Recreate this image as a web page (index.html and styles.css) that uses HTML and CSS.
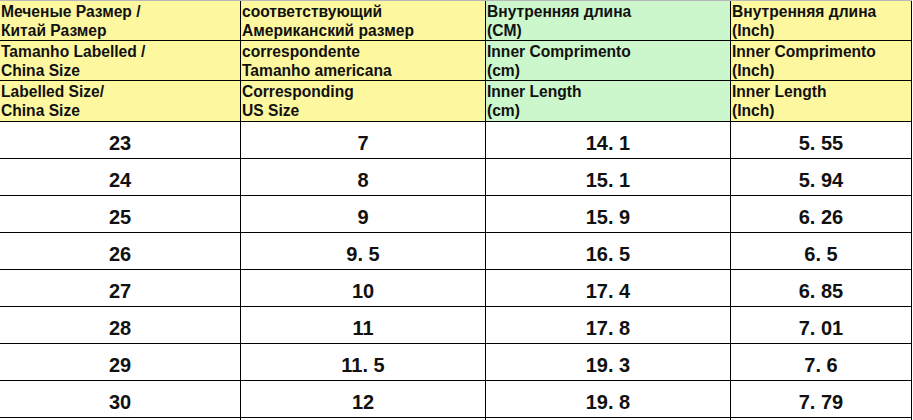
FILE: index.html
```html
<!DOCTYPE html>
<html lang="ru">
<head>
<meta charset="utf-8">
<title>Size chart</title>
<link rel="stylesheet" href="styles.css">
</head>
<body>
<table class="chart">
  <colgroup>
    <col class="c1"><col class="c2"><col class="c3"><col class="c4">
  </colgroup>
  <thead>
    <tr class="h h1">
      <th>Меченые Размер /<br>Китай Размер</th>
      <th>соответствующий<br>Американский размер</th>
      <th class="green">Внутренняя длина<br>(CM)</th>
      <th>Внутренняя длина<br>(Inch)</th>
    </tr>
    <tr class="h h2">
      <th>Tamanho Labelled /<br>China Size</th>
      <th>correspondente<br>Tamanho americana</th>
      <th class="green">Inner Comprimento<br>(cm)</th>
      <th>Inner Comprimento<br>(Inch)</th>
    </tr>
    <tr class="h h3">
      <th>Labelled Size/<br>China Size</th>
      <th>Corresponding<br>US Size</th>
      <th class="green">Inner Length<br>(cm)</th>
      <th>Inner Length<br>(Inch)</th>
    </tr>
  </thead>
  <tbody>
    <tr><td>23</td><td>7</td><td>14. 1</td><td>5. 55</td></tr>
    <tr><td>24</td><td>8</td><td>15. 1</td><td>5. 94</td></tr>
    <tr><td>25</td><td>9</td><td>15. 9</td><td>6. 26</td></tr>
    <tr><td>26</td><td>9. 5</td><td>16. 5</td><td>6. 5</td></tr>
    <tr><td>27</td><td>10</td><td>17. 4</td><td>6. 85</td></tr>
    <tr><td>28</td><td>11</td><td>17. 8</td><td>7. 01</td></tr>
    <tr><td>29</td><td>11. 5</td><td>19. 3</td><td>7. 6</td></tr>
    <tr><td>30</td><td>12</td><td>19. 8</td><td>7. 79</td></tr>
    <tr><td></td><td></td><td></td><td></td></tr>
  </tbody>
</table>
</body>
</html>
```

FILE: styles.css
```css
html, body {
  margin: 0;
  padding: 0;
  background: #ffffff;
}

.chart {
  border-collapse: separate;
  border-spacing: 0;
  table-layout: fixed;
  width: 912px;
  border-top: 1px solid #b8b8b8;
  font-family: "Liberation Sans", Arial, sans-serif;
  color: #111111;
}

.c1 { width: 241px; }
.c2 { width: 245px; }
.c3 { width: 245px; }
.c4 { width: 181px; }

.chart th,
.chart td {
  border-right: 1px solid #000000;
  border-bottom: 1px solid #000000;
  padding: 0;
  overflow: hidden;
  white-space: nowrap;
}

.chart th {
  background: #fdf8a0;
  text-align: left;
  font-weight: bold;
  font-size: 15.6px;
  line-height: 19px;
  padding: 1px 0 0 1px;
  vertical-align: top;
  height: 38px;
}

.chart th.green {
  background: #ccf6cb;
}

.chart .h3 th {
  height: 39px;
}

.chart td {
  text-align: center;
  font-weight: bold;
  font-size: 20px;
  line-height: 30px;
  padding-top: 6px;
  height: 30px;
  vertical-align: top;
}
```
